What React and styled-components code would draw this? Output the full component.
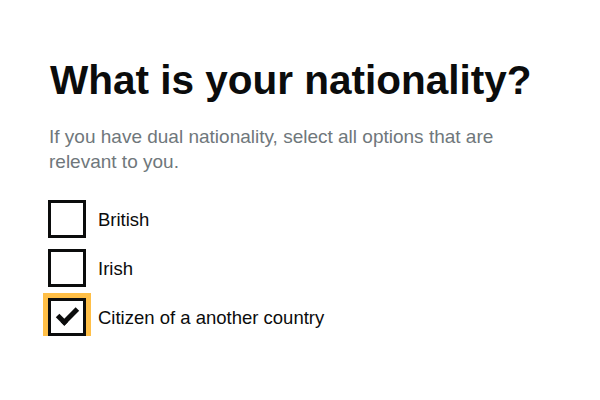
import React from 'react';
import styled, { createGlobalStyle } from 'styled-components';

const GlobalStyle = createGlobalStyle`
  body {
    margin: 0;
    background: #fff;
    font-family: "Liberation Sans", Arial, sans-serif;
    color: #0b0c0c;
  }
`;

const Page = styled.main`
  padding: 58px 48px 0 48px;
`;

const Fieldset = styled.fieldset`
  border: 0;
  margin: 0;
  padding: 0;
`;

const Legend = styled.legend`
  padding: 0 0 0 2px;
  margin: 0 0 21px;
  font-size: 40.5px;
  line-height: 45px;
  font-weight: 700;
`;

const Hint = styled.div`
  color: #6f777b;
  font-size: 19px;
  line-height: 25px;
  max-width: 450px;
  padding-left: 1px;
  margin-bottom: 26px;
`;

const List = styled.div`
  display: flex;
  flex-direction: column;
  gap: 11px;
`;

const Item = styled.label`
  display: flex;
  align-items: center;
  gap: 12px;
  cursor: pointer;
  font-size: 18.5px;
  line-height: 25px;
  color: #0b0c0c;
`;

const Box = styled.span`
  position: relative;
  box-sizing: border-box;
  width: 38px;
  height: 38px;
  flex: none;
  border: 3px solid #0b0c0c;
  background: #fff;
  box-shadow: ${p => (p.focused ? '0 0 0 5px #ffbf47' : 'none')};

  &::after {
    content: '';
    display: ${p => (p.checked ? 'block' : 'none')};
    position: absolute;
    top: 7px;
    left: 6px;
    width: 16px;
    height: 7px;
    border: solid #0b0c0c;
    border-width: 0 0 5px 5px;
    transform: rotate(-45deg);
  }
`;

const options = [
  { label: 'British', checked: false },
  { label: 'Irish', checked: false },
  { label: 'Citizen of a another country', checked: true, focused: true },
];

export default function App() {
  return (
    <>
      <GlobalStyle />
      <Page>
        <Fieldset>
          <Legend>What is your nationality?</Legend>
          <Hint>If you have dual nationality, select all options that are relevant to you.</Hint>
          <List>
            {options.map(o => (
              <Item key={o.label}>
                <Box checked={o.checked} focused={o.focused} />
                {o.label}
              </Item>
            ))}
          </List>
        </Fieldset>
      </Page>
    </>
  );
}
